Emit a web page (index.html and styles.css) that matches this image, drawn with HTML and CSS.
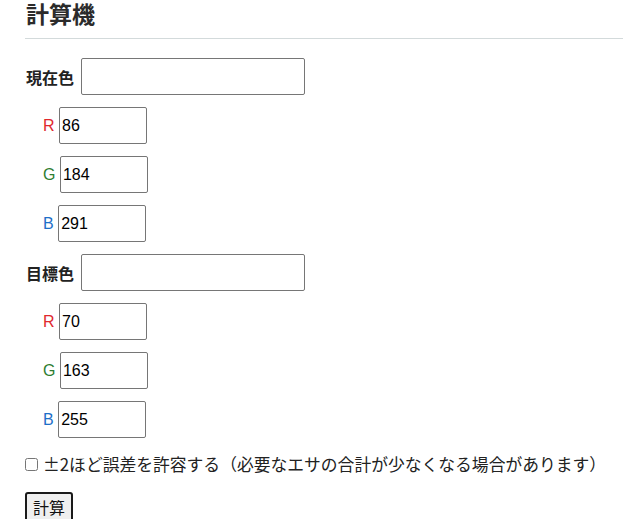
FILE: index.html
```html
<!DOCTYPE html>
<html lang="ja">
<head>
<meta charset="utf-8">
<link rel="stylesheet" href="styles.css">
</head>
<body>
<div class="page">
  <h2 class="title">計算機</h2>
  <div class="group">
    <div class="color-row"><span class="color-label">現在色</span><input class="color-input" type="text"></div>
    <div class="ch-row"><span class="ch r">R</span> <input class="ch-input" type="text" value="86"></div>
    <div class="ch-row"><span class="ch g">G</span> <input class="ch-input" type="text" value="184"></div>
    <div class="ch-row"><span class="ch b">B</span> <input class="ch-input" type="text" value="291"></div>
  </div>
  <div class="group">
    <div class="color-row"><span class="color-label">目標色</span><input class="color-input" type="text"></div>
    <div class="ch-row"><span class="ch r">R</span> <input class="ch-input" type="text" value="70"></div>
    <div class="ch-row"><span class="ch g">G</span> <input class="ch-input" type="text" value="163"></div>
    <div class="ch-row"><span class="ch b">B</span> <input class="ch-input" type="text" value="255"></div>
  </div>
  <label class="tolerance"><input class="check" type="checkbox"><span>±2ほど誤差を許容する（必要なエサの合計が少なくなる場合があります）</span></label>
  <button class="calc" type="button">計算</button>
</div>
</body>
</html>
```
FILE: styles.css
```css
html, body {
  margin: 0;
  padding: 0;
  background: #fff;
}
body {
  font-family: "Liberation Sans", Arial, "Noto Sans CJK JP", sans-serif;
  font-size: 16px;
  color: #222;
  overflow: hidden;
}
.page {
  padding: 0 0 0 25px;
}
.title {
  margin: 0;
  padding: 0 0 8px 1px;
  font-size: 23px;
  line-height: 30px;
  font-weight: bold;
  color: #2b2b2b;
  border-bottom: 1px solid #d3dadb;
}
.group {
  display: flex;
  flex-direction: column;
}
.color-row {
  display: flex;
  align-items: center;
  gap: 7px;
  margin-top: 19px;
}
.group + .group .color-row {
  margin-top: 12px;
}
.color-label {
  font-weight: bold;
  font-size: 16px;
  color: #222;
  padding-left: 1px;
}
.color-input {
  box-sizing: border-box;
  width: 224px;
  height: 37px;
  margin: 0;
  border: 1px solid #767676;
  border-radius: 2px;
  font-family: "Liberation Sans", Arial, sans-serif;
  font-size: 16px;
  padding: 1px 2px;
}
.ch-row {
  margin-top: 12px;
  padding-left: 18px;
  height: 37px;
  display: block;
  white-space: nowrap;
  line-height: 37px;
}
.ch {
  font-size: 16px;
}
.ch.r { color: #e0282e; }
.ch.g { color: #2e7d32; }
.ch.b { color: #1e6fc8; }
.ch-input {
  box-sizing: border-box;
  width: 88px;
  height: 37px;
  margin: 0;
  border: 1px solid #767676;
  border-radius: 2px;
  font-family: "Liberation Sans", Arial, sans-serif;
  font-size: 16px;
  color: #000;
  padding: 1px 2px;
  vertical-align: top;
}
.tolerance {
  display: flex;
  align-items: center;
  gap: 5px;
  height: 20px;
  line-height: 20px;
  margin-top: 16px;
  font-family: "Noto Sans CJK JP", sans-serif;
  font-size: 16.8px;
  color: #222;
}
.check {
  margin: 0;
  width: 13px;
  height: 13px;
}
.calc {
  display: block;
  margin-top: 18px;
  font-family: "Noto Sans CJK JP", sans-serif;
  font-size: 16px;
  line-height: 22px;
  padding: 2px 6px;
  border: 2px solid #1a1a1a;
  border-radius: 3px;
  background: #efefef;
  color: #111;
}
```
